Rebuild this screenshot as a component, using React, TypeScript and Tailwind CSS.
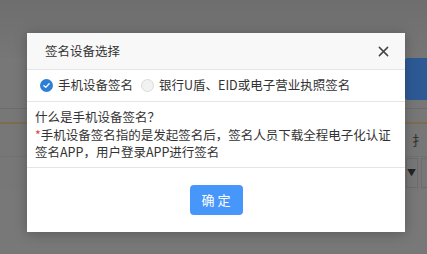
import React from "react";

const font = { fontFamily: '"Noto Sans CJK SC", "Noto Sans", sans-serif' };

function CheckedRadio() {
  return (
    <span className="flex h-[13px] w-[13px] shrink-0 items-center justify-center rounded-full bg-[#2b7fd8]">
      <svg viewBox="0 0 12 12" className="h-[9px] w-[9px]">
        <path d="M2.5 6.2 L5 8.5 L9.5 3.6" fill="none" stroke="#fff" strokeWidth="1.8" strokeLinecap="round" strokeLinejoin="round" />
      </svg>
    </span>
  );
}

function EmptyRadio() {
  return <span className="block h-[13px] w-[13px] shrink-0 rounded-full border border-[#dadada] bg-[#f2f2f2]" />;
}

export default function App() {
  return (
    <div className="relative h-[254px] w-[427px] overflow-hidden bg-[#777777]" style={font}>
      {/* page behind the mask */}
      <div className="flex h-full flex-col">
        <div className="h-[58px] bg-gradient-to-b from-[#6e6e6e] to-[#767676]" />
        <div className="flex h-[42px] justify-end">
          <div className="w-[22px] rounded-l-[3px] bg-[#2d5a95]" />
        </div>
        <div className="h-[8px]" />
        <div className="h-px bg-[#6c6c6c]" />
        <div className="h-[13px]" />
        <div className="h-[2px] bg-[#7c6d4e]" />
        <div className="flex h-[32px] items-center justify-end pr-[2px] text-[13px] text-[#333]">扌</div>
        <div className="h-px bg-[#707070]" />
        <div className="flex h-[33px] items-start justify-end gap-[3px] pt-[1px]">
          <div className="flex h-[30px] w-[12px] items-center justify-start border border-[#6c6c6c] text-[9px] text-[#222]">▼</div>
          <div className="h-[30px] w-[6px] border-y border-l border-[#6c6c6c]" />
        </div>
        <div className="flex-1 bg-[#787878]" />
      </div>

      {/* dialog */}
      <div className="absolute left-[27px] top-[33px] flex w-[378px] flex-col bg-white shadow-[0_2px_12px_rgba(0,0,0,0.25)]">
        <div className="flex h-[37px] items-center justify-between border-b border-[#e5e5e5] bg-[#f8f8f8] pl-[18px] pr-[16px]">
          <span className="text-[12.5px] text-[#333]">签名设备选择</span>
          <svg viewBox="0 0 12 12" className="h-[11px] w-[11px]">
            <path d="M1.5 1.5 L10.5 10.5 M10.5 1.5 L1.5 10.5" stroke="#444" strokeWidth="1.6" strokeLinecap="round" />
          </svg>
        </div>
        <div className="flex h-[32px] items-center border-b border-[#e5e5e5] pl-[13px] text-[12.5px] text-[#333]">
          <CheckedRadio />
          <span className="ml-[5px]">手机设备签名</span>
          <span className="ml-[8px]">
            <EmptyRadio />
          </span>
          <span className="ml-[5px]">银行U盾、EID或电子营业执照签名</span>
        </div>
        <div className="flex h-[66px] flex-col justify-center whitespace-nowrap border-b border-[#e5e5e5] pl-[8px] text-[12.5px] leading-[17.5px] text-[#333]">
          <div>什么是手机设备签名？</div>
          <div>
            <span className="text-[#e53935]">*</span>手机设备签名指的是发起签名后，签名人员下载全程电子化认证
          </div>
          <div>签名APP，用户登录APP进行签名</div>
        </div>
        <div className="flex h-[64px] items-center justify-center">
          <button className="flex h-[30px] w-[53px] items-center justify-center rounded-[4px] bg-[#4797fa] pl-[3px] text-[13px] tracking-[3px] text-white">
            确定
          </button>
        </div>
      </div>
    </div>
  );
}
